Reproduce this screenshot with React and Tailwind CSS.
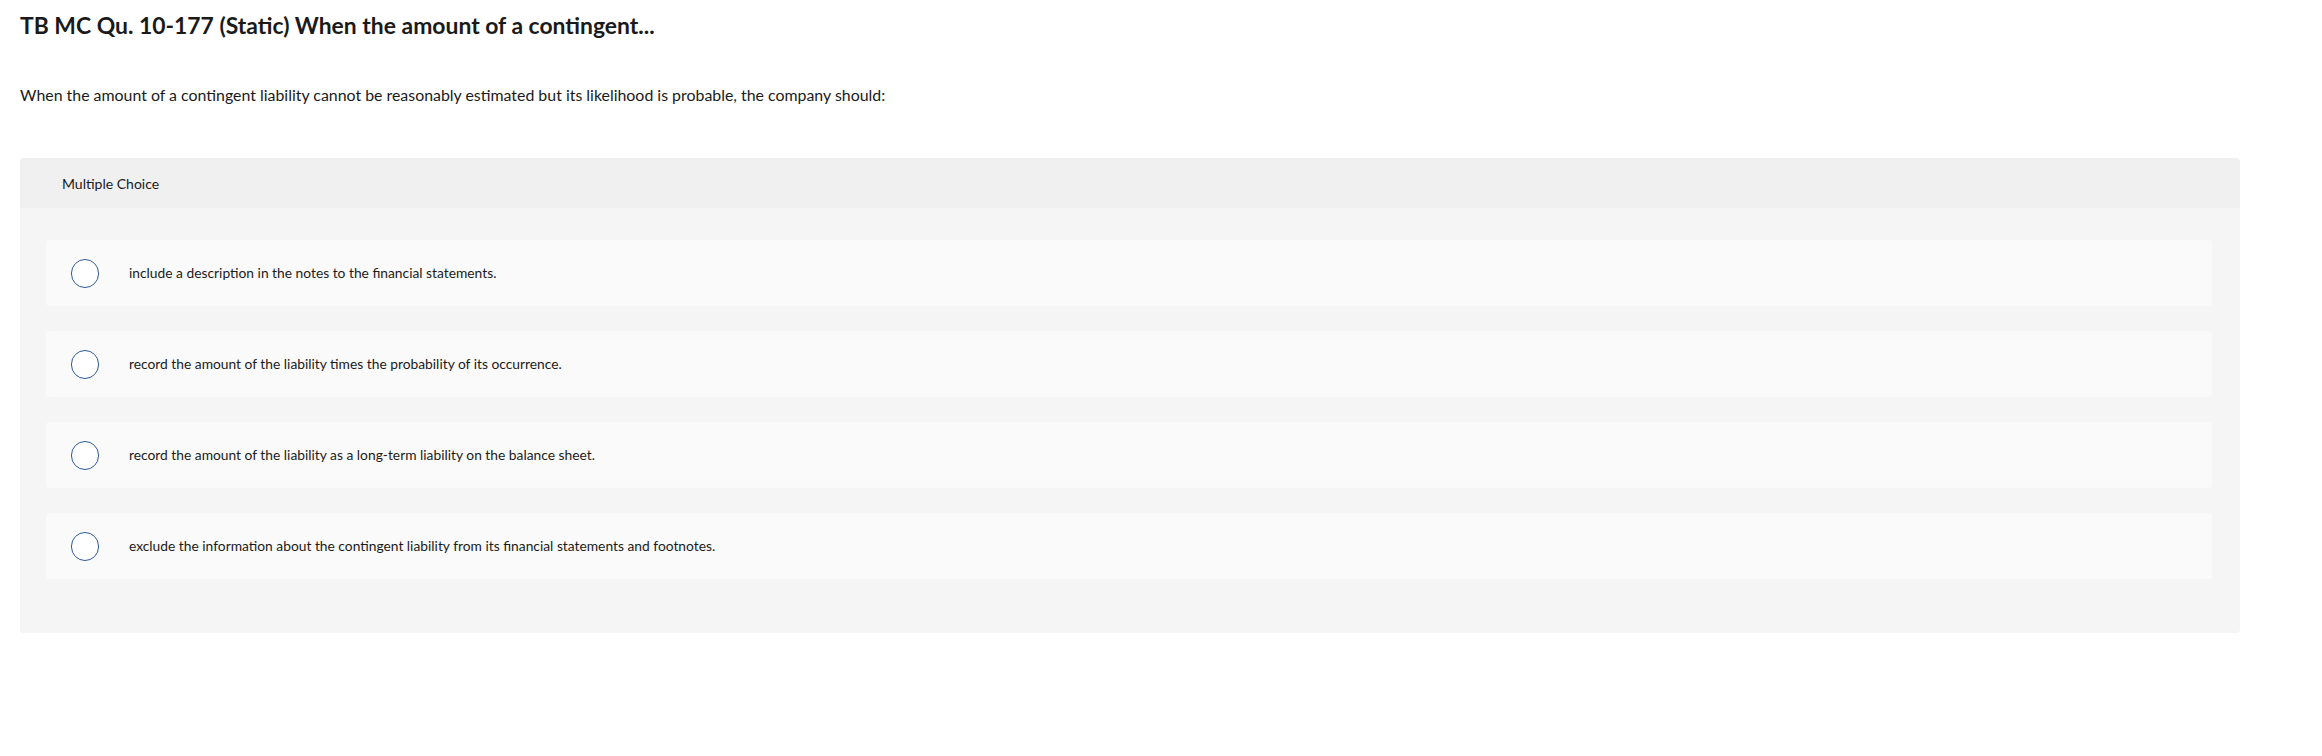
import React from "react";

const options = [
  "include a description in the notes to the financial statements.",
  "record the amount of the liability times the probability of its occurrence.",
  "record the amount of the liability as a long-term liability on the balance sheet.",
  "exclude the information about the contingent liability from its financial statements and footnotes.",
];

function Radio() {
  return (
    <span className="block w-[28px] h-[29px] shrink-0 rounded-full border-[1.5px] border-[#2d5a9a] bg-white" />
  );
}

export default function App() {
  return (
    <div
      className="min-h-screen bg-white text-[#1a1a1a]"
      style={{ fontFamily: "Lato, 'Open Sans', sans-serif" }}
    >
      <div className="w-[2240px] pl-[20px] pt-[10px]">
        {/* TITLE */}
        <h1 className="text-[22.9px] leading-[30px] font-bold">
          TB MC Qu. 10-177 (Static) When the amount of a contingent...
        </h1>

        {/* QUESTION */}
        <p className="mt-[44px] text-[15.9px] leading-[22px]">
          When the amount of a contingent liability cannot be reasonably
          estimated but its likelihood is probable, the company should:
        </p>

        {/* ANSWER PANEL */}
        <div className="mt-[52px] rounded-[4px] bg-[#f5f5f5] overflow-hidden">
          <div className="h-[50px] flex items-center pl-[42px] bg-[#f0f0f0] text-[14px]">
            Multiple Choice
          </div>
          <div className="pl-[26px] pr-[28px] pt-[32px] pb-[54px] flex flex-col gap-[25px]">
            {options.map((opt) => (
              <div
                key={opt}
                className="h-[66px] flex items-center rounded-[4px] bg-[#fafafa] pl-[25px]"
              >
                <Radio />
                <span className="ml-[30px] text-[13.8px]">{opt}</span>
              </div>
            ))}
          </div>
        </div>
      </div>
    </div>
  );
}
